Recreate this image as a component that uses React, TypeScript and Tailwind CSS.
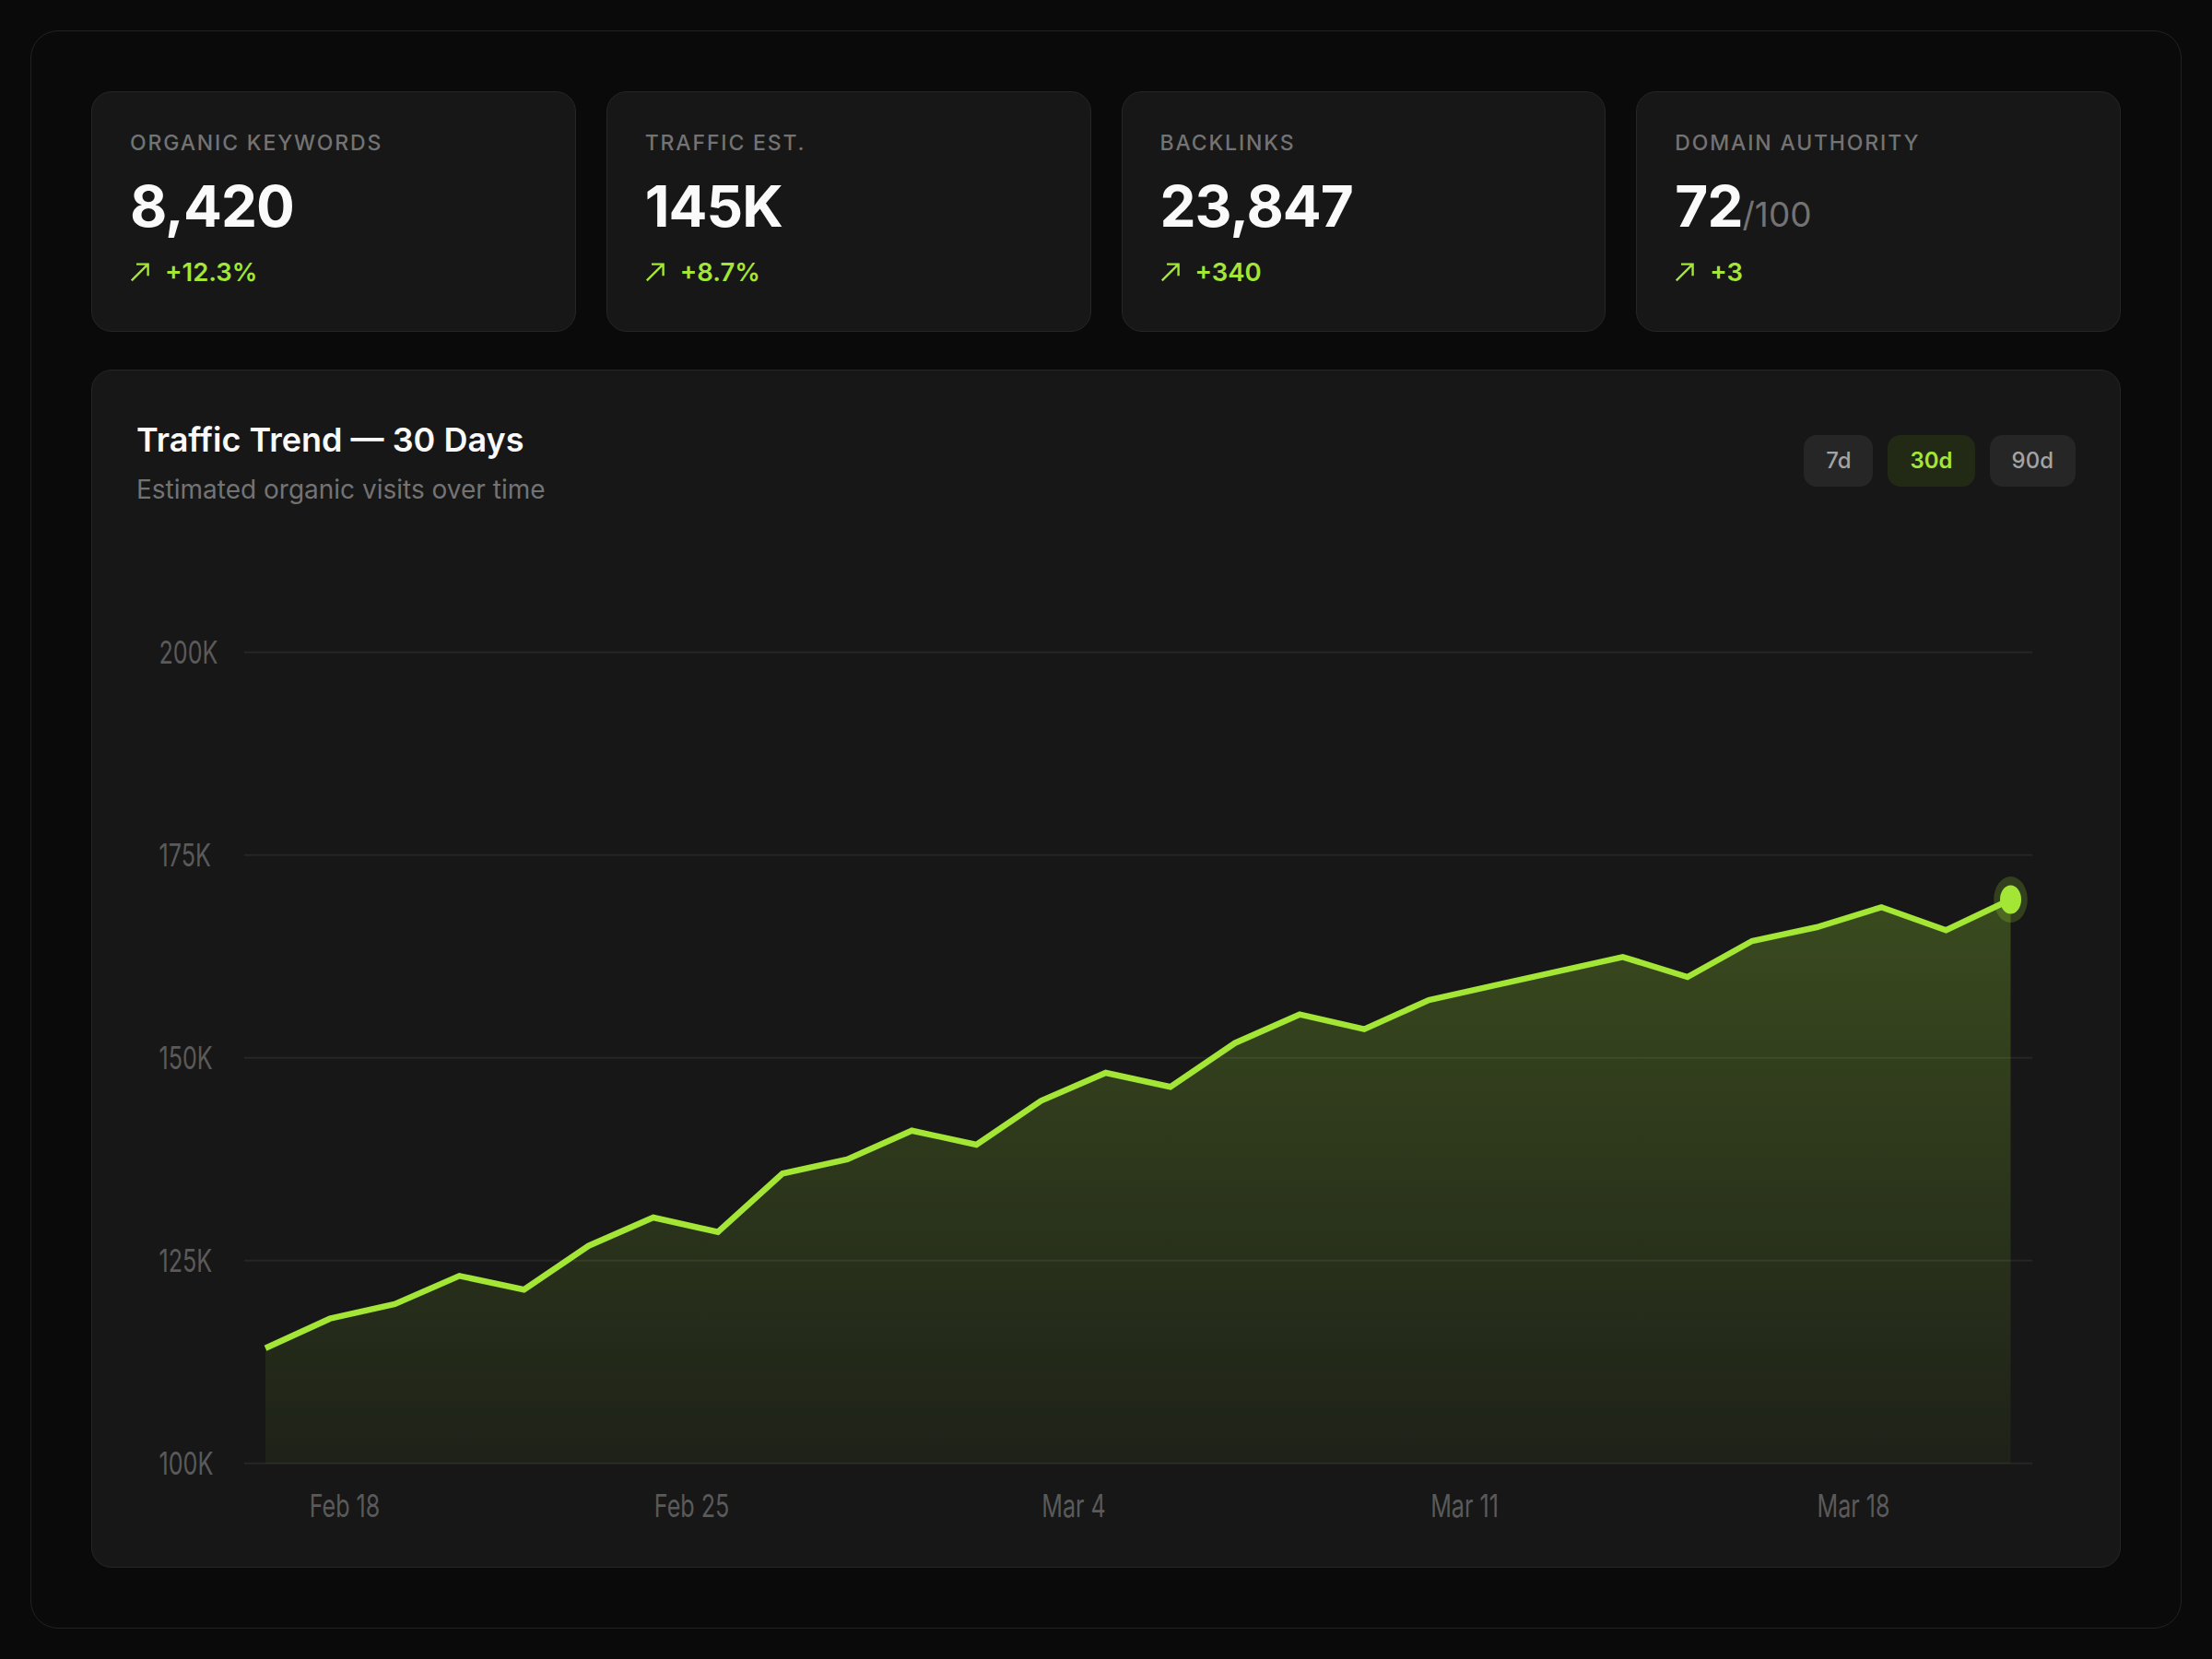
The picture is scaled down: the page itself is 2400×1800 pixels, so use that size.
import React from "react";

const LIME = "#a3e635";

function ArrowUpRight() {
  return (
    <svg width="22" height="21" viewBox="0 0 22 21" fill="none">
      <path d="M1.8 19.4 L19.6 1.6 M7 1.6 H19.6 V14.2" stroke={LIME} strokeWidth="2.4" />
    </svg>
  );
}

type Stat = { label: string; value: string; suffix?: string; change: string };

const stats: Stat[] = [
  { label: "ORGANIC KEYWORDS", value: "8,420", change: "+12.3%" },
  { label: "TRAFFIC EST.", value: "145K", change: "+8.7%" },
  { label: "BACKLINKS", value: "23,847", change: "+340" },
  { label: "DOMAIN AUTHORITY", value: "72", suffix: "/100", change: "+3" },
];

function StatCard({ s }: { s: Stat }) {
  return (
    <div className="rounded-[22px] border border-[#262626] bg-[#171717] px-[41px] pt-[41px] pb-[47px]">
      <div className="text-[23px] leading-[28px] font-medium tracking-[0.08em] text-[#737373]">{s.label}</div>
      <div className="mt-[19px] text-[62px] leading-[72px] font-bold tracking-[-0.015em] text-[#fafafa]">
        {s.value}
        {s.suffix && (
          <span className="text-[37px] leading-none font-normal tracking-normal text-[#737373]">{s.suffix}</span>
        )}
      </div>
      <div className="mt-[19px] flex items-center gap-[16px] text-[27.5px] leading-[33px] font-semibold text-[#a3e635]">
        <ArrowUpRight />
        <span>{s.change}</span>
      </div>
    </div>
  );
}

const pts = [
  916.7, 884.7, 869, 838.3, 853.3, 805.7, 775, 790.7, 727.3, 712, 680.7, 696, 648.3, 618, 633.3, 585.7,
  554.7, 570.7, 539, 523.4, 507.8, 492.3, 514, 475, 460, 438.3, 463.3, 430,
];
const X0 = 188;
const DX = 70.13;
const BASE = 1041.7;

const gridY = [161.7, 381.7, 601.7, 821.7, 1041.7];
const yLabels = ["200K", "175K", "150K", "125K", "100K"];
const xLabels: [string, number][] = [
  ["Feb 18", 274],
  ["Feb 25", 650.6],
  ["Mar 4", 1065],
  ["Mar 11", 1489],
  ["Mar 18", 1911],
];

function Chart() {
  const coords = pts.map((y, i) => [X0 + i * DX, y] as const);
  const line = coords.map(([x, y], i) => `${i === 0 ? "M" : "L"}${x.toFixed(1)} ${y}`).join(" ");
  const last = coords[coords.length - 1];
  const area = `${line} L${last[0].toFixed(1)} ${BASE} L${X0} ${BASE} Z`;
  return (
    <svg width="2200" height="1151" viewBox="0 3 2200 1151" className="block">
      <defs>
        <linearGradient id="areaFill" x1="0" y1="0" x2="0" y2="1">
          <stop offset="0%" stopColor={LIME} stopOpacity="0.25" />
          <stop offset="100%" stopColor={LIME} stopOpacity="0.05" />
        </linearGradient>
      </defs>
      {gridY.map((y, i) => (
        <g key={i}>
          <line x1="165" x2="2105" y1={y} y2={y} stroke="#262626" strokeWidth="2" />
          <g transform={`translate(72.5 ${y + 12.5}) scale(0.73 1)`}>
            <text x="0" y="0" fontSize="34.4" fill="#5a5a5a" fontFamily="Inter, sans-serif">
              {yLabels[i]}
            </text>
          </g>
        </g>
      ))}
      <path d={area} fill="url(#areaFill)" />
      <path d={line} fill="none" stroke={LIME} strokeWidth="6.5" strokeLinejoin="miter" />
      <ellipse cx={last[0]} cy={last[1]} rx="18.3" ry="25" fill={LIME} fillOpacity="0.2" />
      <ellipse cx={last[0]} cy={last[1]} rx="11.5" ry="15.5" fill={LIME} />
      {xLabels.map(([t, x]) => (
        <g key={t} transform={`translate(${x} 1100) scale(0.73 1)`}>
          <text x="0" y="0" fontSize="34.4" fill="#5a5a5a" textAnchor="middle" fontFamily="Inter, sans-serif">
            {t}
          </text>
        </g>
      ))}
    </svg>
  );
}

export default function App() {
  return (
    <div className="min-h-[1800px] w-[2400px] bg-[#0a0a0a] p-[33px] font-[Inter,sans-serif]">
      <div className="rounded-[30px] border border-[#222222] bg-[#0a0a0a] p-[65px]">
        <div className="grid grid-cols-4 gap-[33px]">
          {stats.map((s) => (
            <StatCard key={s.label} s={s} />
          ))}
        </div>
        <div className="mt-[41px] overflow-hidden rounded-[22px] border border-[#262626] bg-[#171717]">
          <div className="flex justify-between px-[48px] pt-[53px]">
            <div>
              <div className="text-[36px] leading-[44px] font-semibold text-[#fafafa]">Traffic Trend — 30 Days</div>
              <div className="mt-[14px] text-[28px] leading-[36px] text-[#737373]">Estimated organic visits over time</div>
            </div>
            <div className="mt-[17px] flex gap-[16px] self-start">
              <button className="h-[56px] rounded-[14px] bg-[#262626] px-[24px] text-[24px] font-medium text-[#a3a3a3]">7d</button>
              <button className="h-[56px] rounded-[14px] bg-[#222a16] px-[24px] text-[24px] font-semibold text-[#a3e635]">30d</button>
              <button className="h-[56px] rounded-[14px] bg-[#262626] px-[24px] text-[24px] font-medium text-[#a3a3a3]">90d</button>
            </div>
          </div>
          <Chart />
        </div>
      </div>
    </div>
  );
}
